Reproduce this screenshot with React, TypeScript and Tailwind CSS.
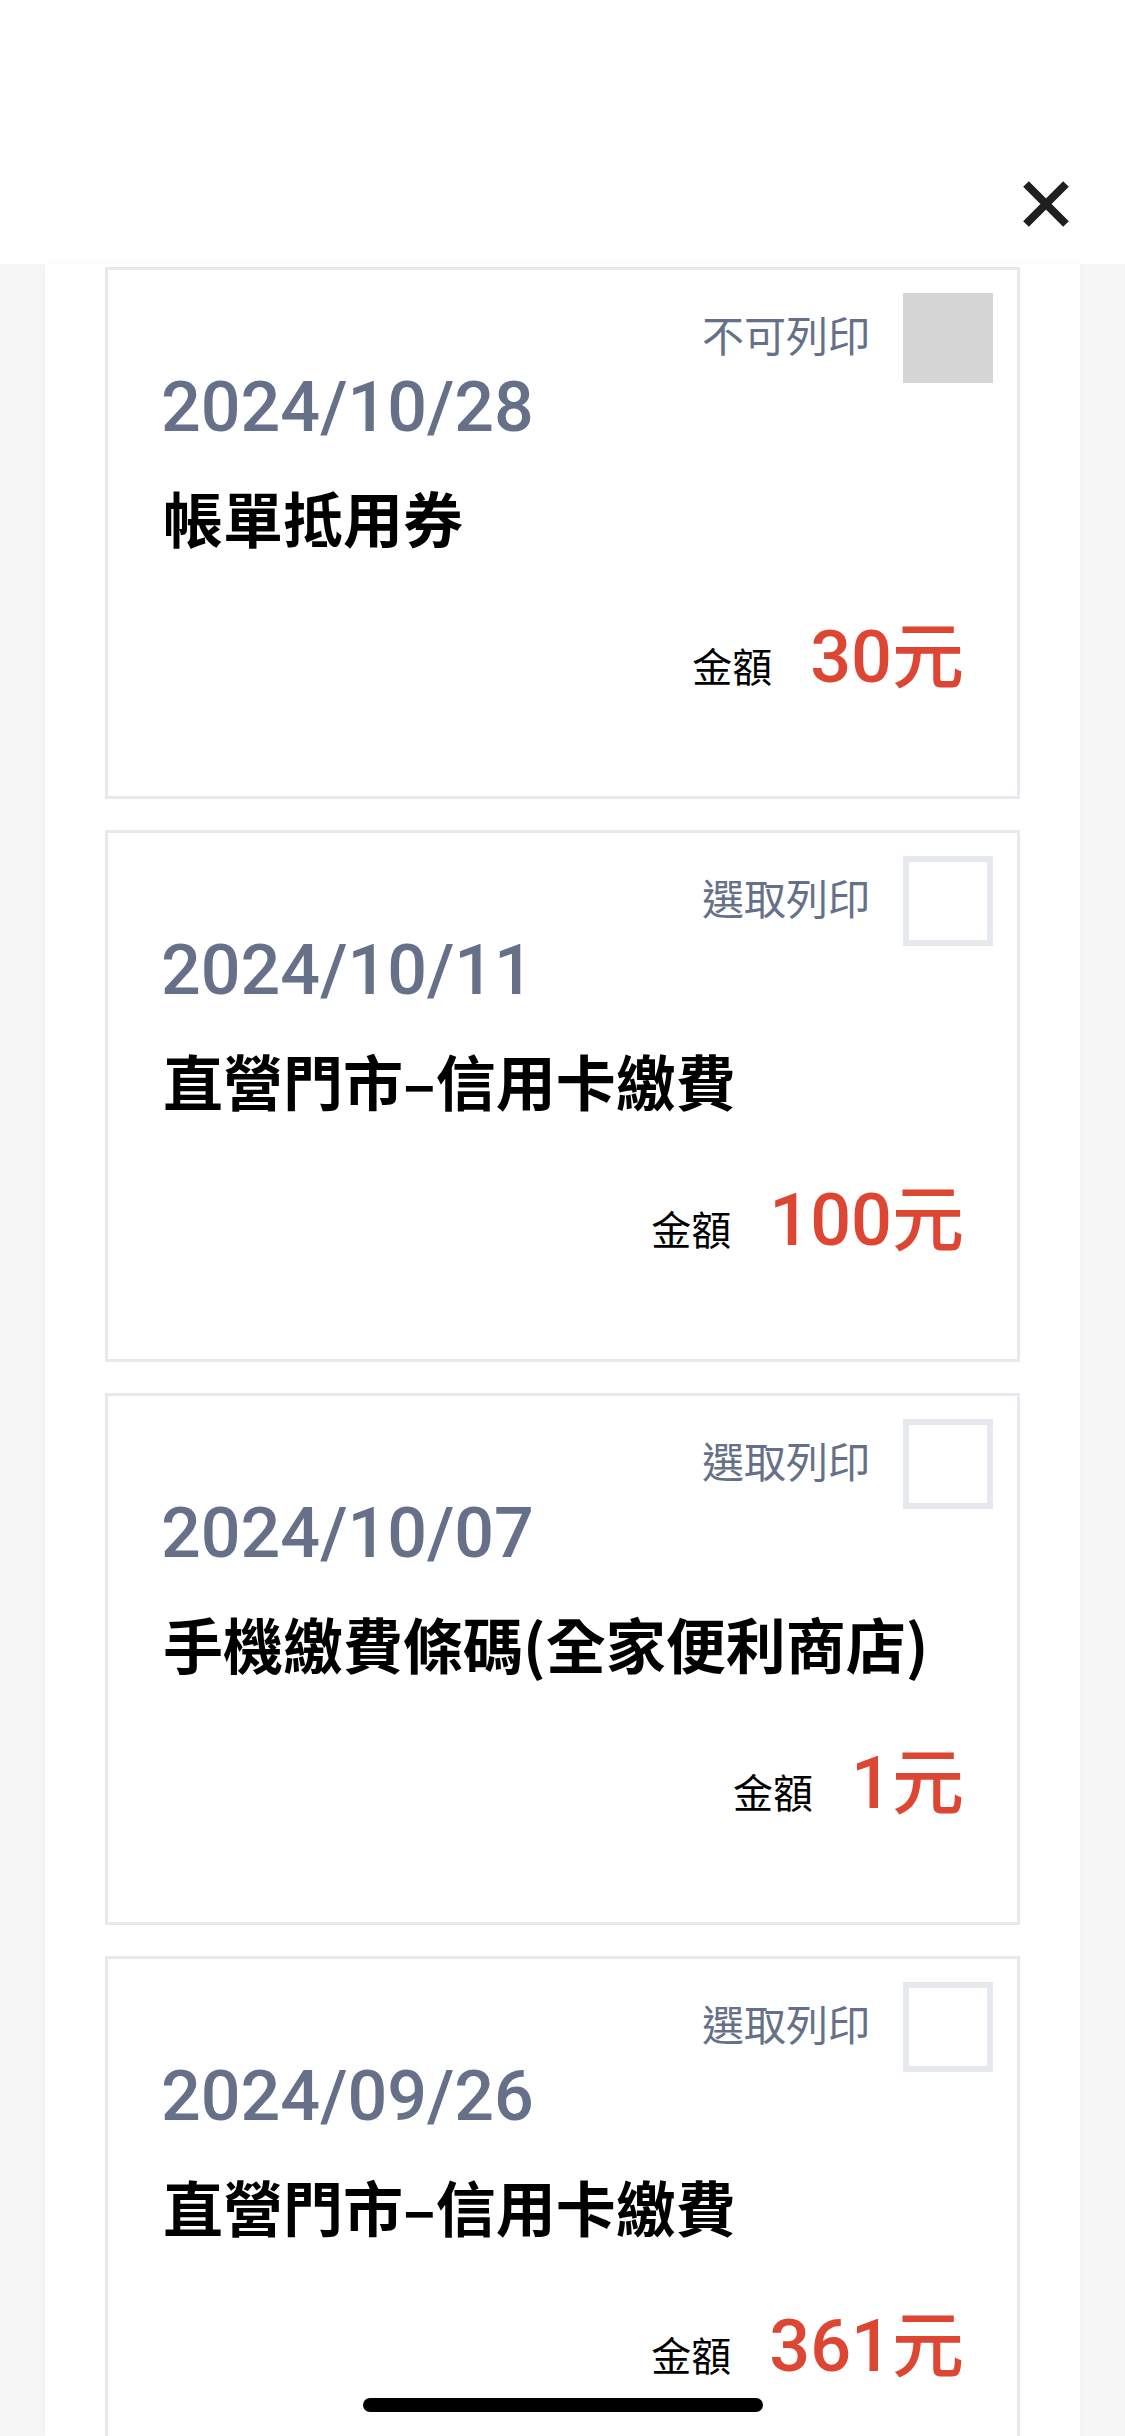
import React from "react";

const items = [
  { date: "2024/10/28", title: "帳單抵用券", amount: "30", printable: false },
  { date: "2024/10/11", title: "直營門市–信用卡繳費", amount: "100", printable: true },
  { date: "2024/10/07", title: "手機繳費條碼(全家便利商店)", amount: "1", printable: true },
  { date: "2024/09/26", title: "直營門市–信用卡繳費", amount: "361", printable: true },
];

const cjk = "font-['Noto_Sans_CJK_TC','Noto_Sans_CJK_SC',sans-serif]";

const RecordCard = ({ item }: { item: any }) => {
  return (
    <div className="h-[532px] shrink-0 border-[3px] border-[#e6e9ee] bg-white">
      <div className="flex items-center justify-end pt-[23px] pr-[24px]">
        <span className={`${cjk} mr-[33px] mb-[8px] text-[42px] leading-none text-[#667189]`}>
          {item.printable ? "選取列印" : "不可列印"}
        </span>
        {item.printable ? (
          <div className="h-[90px] w-[90px] border-[6px] border-[#e5e9ee] bg-white" />
        ) : (
          <div className="h-[90px] w-[90px] bg-[#d5d5d5]" />
        )}
      </div>
      <div className="-mt-[11px] pl-[53px] font-['Roboto',sans-serif] text-[70px] font-medium leading-[70px] text-[#667189]">
        {item.date}
      </div>
      <div className={`${cjk} mt-[45px] pl-[55px] text-[60px] font-bold leading-[60px] text-black`}>
        {item.title}
      </div>
      <div className="mt-[69px] flex items-baseline justify-end pr-[53px]">
        <span className={`${cjk} mr-[38px] text-[40px] leading-none text-black`}>金額</span>
        <span className="font-['Roboto',sans-serif] text-[72px] font-medium leading-[70px] text-[#dd4633]">
          {item.amount}
          <span className={`${cjk}`}>元</span>
        </span>
      </div>
    </div>
  );
};

export default function App() {
  return (
    <div className="relative h-[2436px] w-[1125px] overflow-hidden bg-[#f6f6f6]">
      <header className="flex h-[264px] items-start justify-end bg-white pt-[180px] pr-[55px]">
        <svg width="48" height="48" viewBox="0 0 48 48">
          <path d="M4 4 L44 44 M44 4 L4 44" stroke="#1f1f1f" strokeWidth="8" strokeLinecap="butt" />
        </svg>
      </header>
      <div className="mx-[45px] flex h-[2172px] flex-col gap-[31px] bg-white px-[60px] pt-[3px] shadow-[0_0_12px_rgba(0,0,0,0.03)]">
        {items.map((item, i) => (
          <RecordCard key={i} item={item} />
        ))}
      </div>
      <div className="absolute bottom-[24px] left-1/2 h-[14px] w-[400px] -translate-x-1/2 rounded-full bg-black" />
    </div>
  );
}
